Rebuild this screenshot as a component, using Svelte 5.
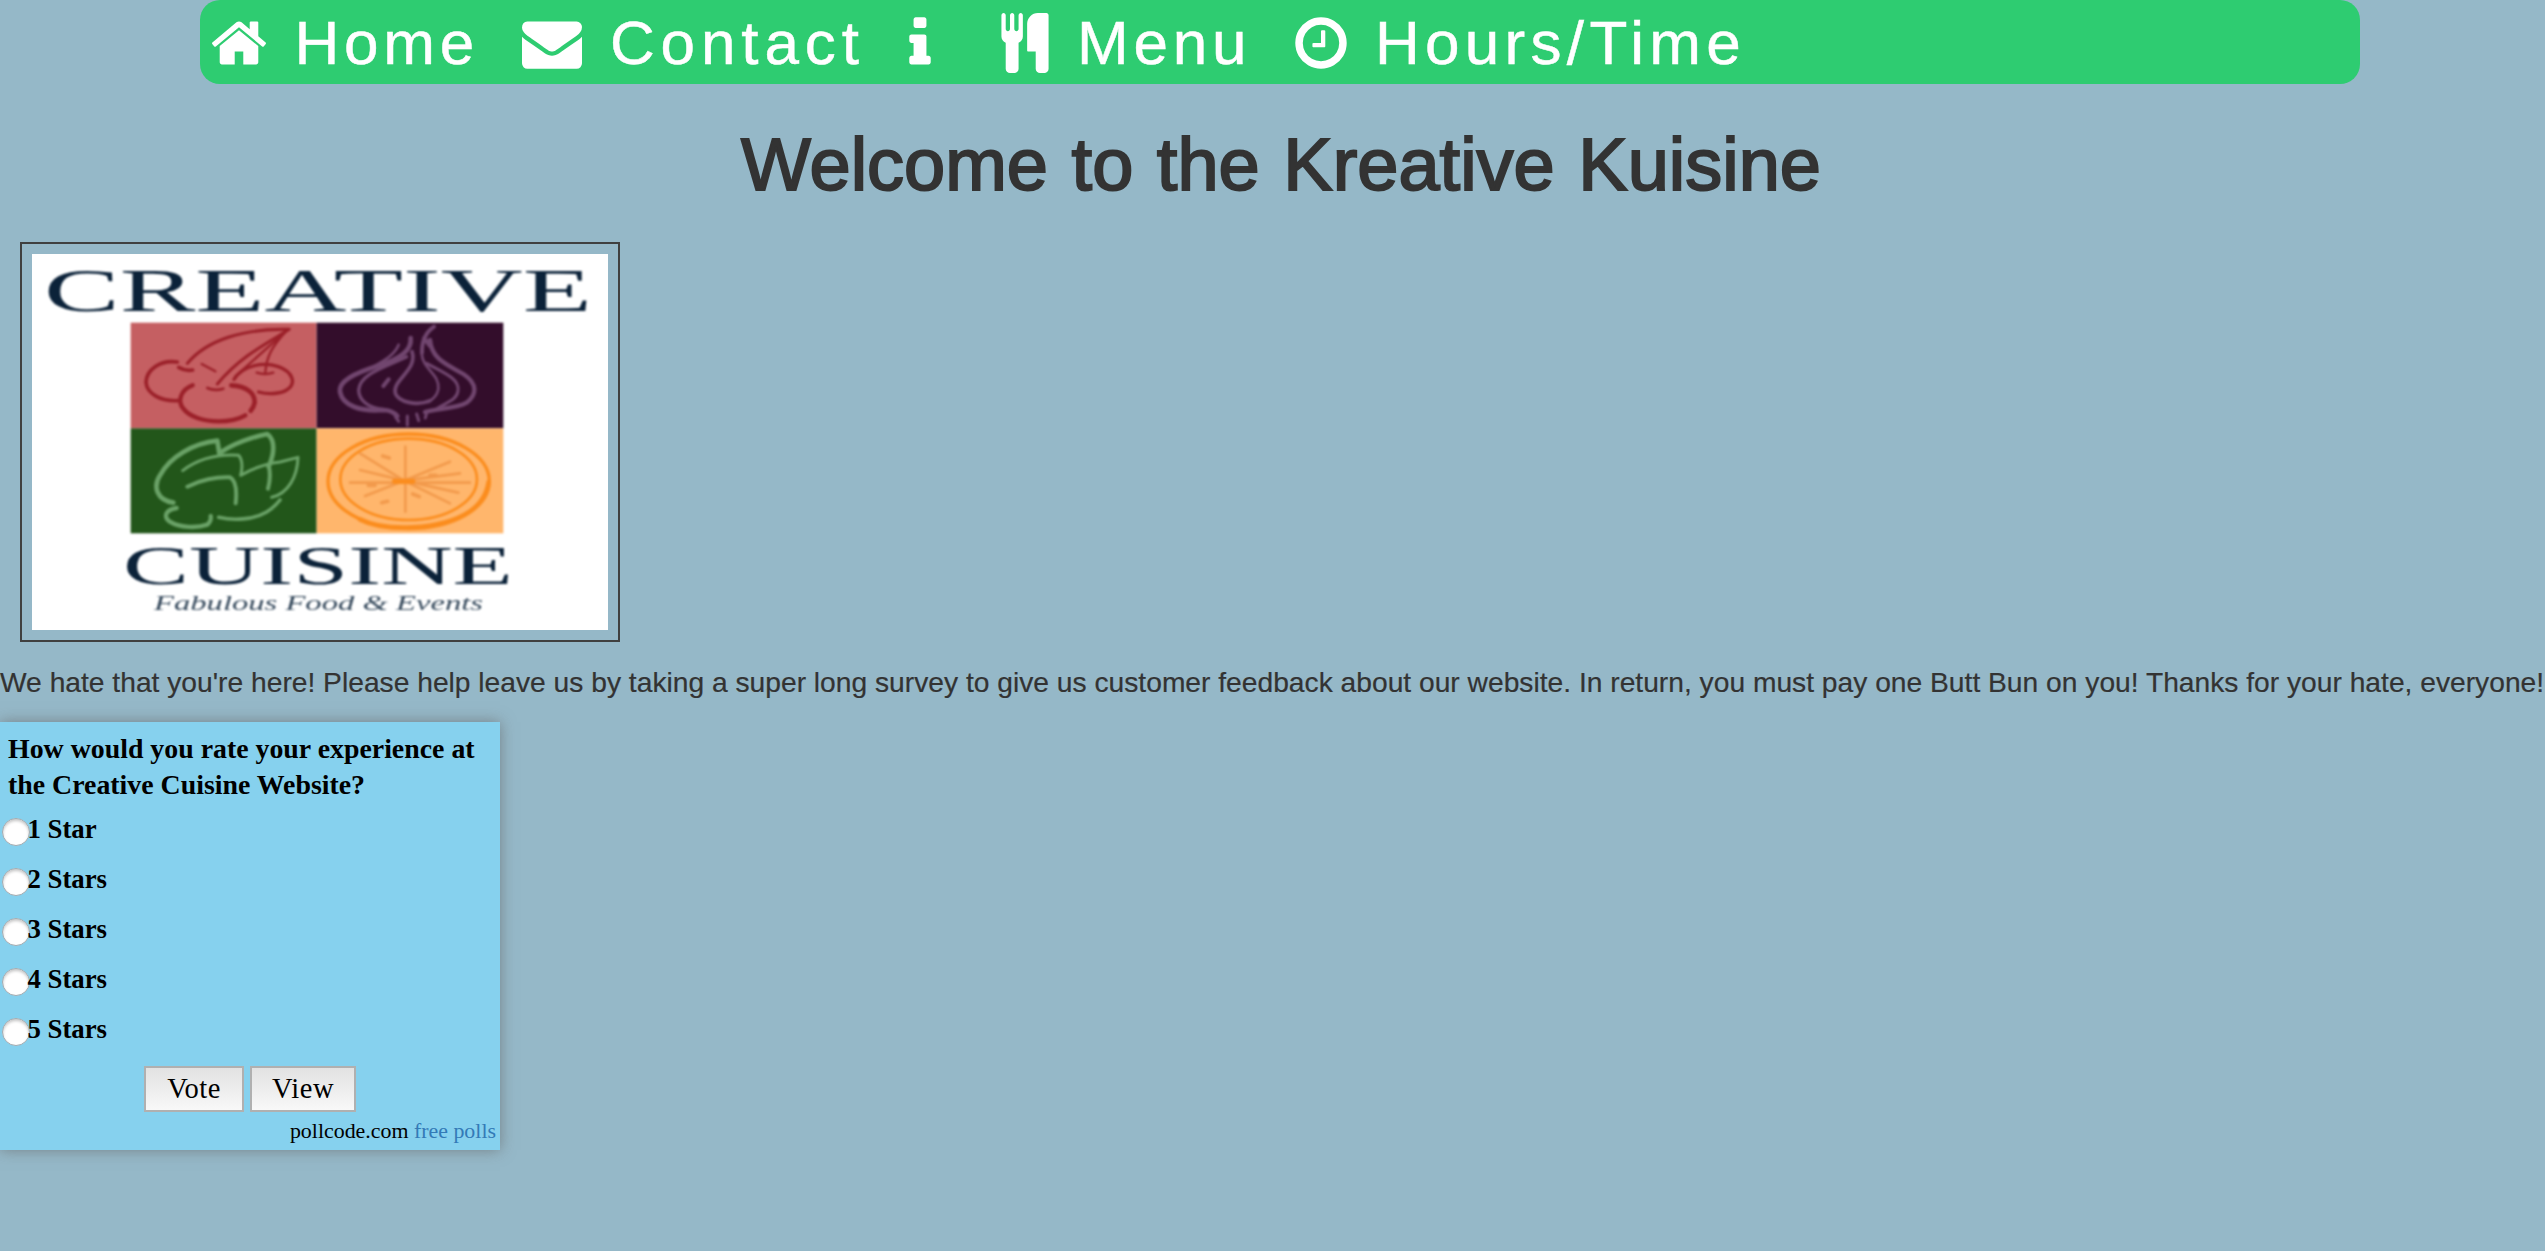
<script>
  const links = [
    {
      id: 'home',
      label: 'Home',
      icon: 'M1472 992v480q0 26-19 45t-45 19h-384v-384h-256v384h-384q-26 0-45-19t-19-45v-480q0-1 .5-3t.5-3l575-474 575 474q1 2 1 6zm223-69l-62 74q-8 9-21 11h-3q-13 0-21-7l-692-577-692 577q-12 8-24 7-13-2-21-11l-62-74q-8-10-7-23.5t11-21.5l719-599q32-26 76-26t76 26l244 204v-195q0-14 9-23t23-9h192q14 0 23 9t9 23v408l219 182q10 8 11 21.5t-7 23.5z'
    },
    {
      id: 'contact',
      label: 'Contact',
      icon: 'M1792 710v794q0 66-47 113t-113 47h-1472q-66 0-113-47t-47-113v-794q44 49 101 87 362 246 497 345 57 42 92.5 65.5t94.5 48 110 24.5h2q51 0 110-24.5t94.5-48 92.5-65.5q170-123 498-345 57-39 100-87zm0-294q0 79-49 151t-122 123q-376 261-468 325-10 7-42.5 31t-54 38.5-52 32.5-57.5 27-50 9h-2q-23 0-50-9t-57.5-27-52-32.5-54-38.5-42.5-31q-91-64-262-182.5t-205-142.5q-62-42-117-115.5t-55-136.5q0-78 41.5-130t118.5-52h1472q65 0 112.5 47t47.5 113z'
    },
    {
      id: 'info',
      label: '',
      icon: 'M1216 1344v128q0 26-19 45t-45 19h-512q-26 0-45-19t-19-45v-128q0-26 19-45t45-19h64v-384h-64q-26 0-45-19t-19-45v-128q0-26 19-45t45-19h384q26 0 45 19t19 45v576h64q26 0 45 19t19 45zm-128-1152v192q0 26-19 45t-45 19h-256q-26 0-45-19t-19-45v-192q0-26 19-45t45-19h256q26 0 45 19t19 45z'
    },
    {
      id: 'menu',
      label: 'Menu',
      icon: 'M832 64v640q0 61-35.5 111t-92.5 70v779q0 52-38 90t-90 38h-128q-52 0-90-38t-38-90v-779q-57-20-92.5-70t-35.5-111v-640q0-26 19-45t45-19 45 19 19 45v416q0 26 19 45t45 19 45-19 19-45v-416q0-26 19-45t45-19 45 19 19 45v416q0 26 19 45t45 19 45-19 19-45v-416q0-26 19-45t45-19 45 19 19 45zm768 0v1600q0 52-38 90t-90 38h-128q-52 0-90-38t-38-90v-512h-224q-13 0-22.5-9.5t-9.5-22.5v-800q0-132 94-226t226-94h256q26 0 45 19t19 45z'
    },
    {
      id: 'hours',
      label: 'Hours/Time',
      icon: 'M1024 544v448q0 14-9 23t-23 9h-320q-14 0-23-9t-9-23v-64q0-14 9-23t23-9h224v-352q0-14 9-23t23-9h64q14 0 23 9t9 23zm416 352q0-148-73-273t-198-198-273-73-273 73-198 198-73 273 73 273 198 198 273 73 273-73 198-198 73-273zm224 0q0 209-103 385.5t-279.5 279.5-385.5 103-385.5-103-279.5-279.5-103-385.5 103-385.5 279.5-279.5 385.5-103 385.5 103 279.5 279.5 103 385.5z'
    }
  ];
  const options = ['1 Star', '2 Stars', '3 Stars', '4 Stars', '5 Stars'];
  let choice = $state('');
</script>

<nav>
  {#each links as link (link.id)}
    <a class="link {link.id}" href="#{link.id}" aria-label={link.label || link.id}>
      <svg class="icon" viewBox="0 0 1792 1792"><path d={link.icon} /></svg>
      {#if link.label}<span class="label">{link.label}</span>{/if}
    </a>
  {/each}
</nav>

<h1>Welcome to the Kreative Kuisine</h1>

<div class="frame">
  <svg class="logo" viewBox="0 0 576 376">
    <rect width="576" height="376" fill="#fff" />
    <g class="soft">
      <g class="navy">
        <text x="12" y="56.5" font-size="62" textLength="548" lengthAdjust="spacingAndGlyphs">CREATIVE</text>
        <text x="91" y="329.5" font-size="55" textLength="390" lengthAdjust="spacingAndGlyphs">CUISINE</text>
        <text class="tag" x="122" y="356" font-size="21" textLength="329" lengthAdjust="spacingAndGlyphs">Fabulous Food &amp; Events</text>
      </g>
      <g transform="translate(88 56) scale(.33333)">
        <rect x="32" y="38" width="558" height="317" fill="#c55f62" />
        <rect x="590" y="38" width="560" height="317" fill="#330d2b" />
        <rect x="32" y="355" width="558" height="315" fill="#22561a" />
        <rect x="590" y="355" width="560" height="315" fill="#ffb66c" />

        <!-- cherries -->
        <g class="line cherry">
          <path stroke-width="9" d="M202 160C260 90 370 55 508 58C440 100 360 140 292 222" />
          <path stroke-width="7" d="M500 62C455 110 440 140 436 186M410 188q25 8 50 0M345 200L500 62M245 162L286 184" />
          <path stroke-width="11" d="M172 156C120 148 80 180 78 216C80 250 120 274 172 272M176 172q20 12 42 8" />
          <path stroke-width="13" d="M218 226C180 240 172 275 190 296C208 320 250 334 296 334C330 334 355 328 376 316" />
          <path stroke-width="14" d="M334 226C380 228 405 250 404 278Q402 290 392 302" />
          <path stroke-width="8" d="M262 234q22 10 48 2" />
          <path stroke-width="10" d="M342 208C370 165 430 155 475 170C520 186 530 222 500 240C480 252 445 254 416 246" />
        </g>

        <!-- garlic -->
        <g class="line garlic">
          <path stroke-width="14" d="M872 84C876 122 840 145 780 166C700 190 655 215 660 246C668 286 720 306 790 300Q815 300 832 318" />
          <path stroke-width="8" d="M836 104C822 140 780 158 745 178" />
          <path stroke-width="10" d="M860 140C800 170 720 190 716 240C716 270 745 295 790 298" />
          <path stroke-width="11" d="M876 125C895 180 815 210 826 250C835 275 890 290 930 272" />
          <path stroke-width="8" d="M905 130C908 180 960 190 955 238Q950 262 925 276" />
          <path stroke-width="9" d="M920 160C965 185 1020 205 1014 242C1010 270 985 275 950 296" />
          <path stroke-width="13" d="M930 90C935 150 985 165 1030 192C1075 222 1070 255 1040 278C1010 296 950 296 915 306" />
          <path stroke-width="12" d="M942 50Q905 75 906 128M912 84l18 24M806 208l-16 20" />
          <path stroke-width="9" d="M826 320l10 14M862 318v28M890 312l6 20M920 308l-4 16" />
        </g>

        <!-- artichoke -->
        <g class="line leaf">
          <path stroke-width="14" d="M160 578C110 570 98 530 120 496C150 440 220 400 292 392L298 430C340 400 400 380 442 372C466 390 464 430 446 470" />
          <path stroke-width="9" d="M188 482C230 450 290 432 356 436Q372 455 362 496C400 475 440 460 480 456L534 442C532 500 505 550 455 562" />
          <path stroke-width="12" d="M202 530C240 510 290 500 330 502Q354 515 347 580M446 466Q454 500 444 536" />
          <path stroke-width="13" d="M170 594C135 600 130 620 148 634C180 654 230 655 262 644Q275 632 272 618" />
          <path stroke-width="11" d="M296 622C340 632 400 630 440 606Q465 590 480 570" />
        </g>

        <!-- orange slice -->
        <g class="line orange">
          <ellipse cx="866" cy="514" rx="242" ry="142" stroke-width="10" />
          <ellipse cx="866" cy="508" rx="205" ry="122" stroke-width="8" />
          <path stroke-width="14" d="M720 628C790 664 960 664 1050 604Q1098 570 1106 516" />
          <path class="seg" stroke-width="8" d="M856 410V605M690 518H1050M720 430L852 512L990 455M720 480L852 512L990 580M735 558L852 512L1020 490M1015 548L852 512" />
          <path stroke-width="16" d="M824 514h54" />
          <path class="seg" stroke-width="11" d="M788 438l20 6M878 552l20 8M785 578l18-4M745 526h20M930 496h18" />
        </g>
      </g>
    </g>
  </svg>
</div>

<p class="intro">We hate that you're here! Please help leave us by taking a super long survey to give us customer feedback about our website. In return, you must pay one Butt Bun on you! Thanks for your hate, everyone!</p>

<form class="poll">
  <div class="question">How would you rate your experience at<br />the Creative Cuisine Website?</div>
  {#each options as option (option)}
    <label class="option">
      <input type="radio" name="rating" value={option} bind:group={choice} />
      <span>{option}</span>
    </label>
  {/each}
  <div class="actions">
    <button type="button" class="vote">Vote</button>
    <button type="button" class="view">View</button>
  </div>
  <div class="credit">pollcode.com <a href="#polls">free polls</a></div>
</form>

<style>
  :global(html) {
    overflow: hidden;
  }
  :global(body) {
    margin: 0;
    min-height: 100vh;
    background: #95b8c8;
    color: #333;
    font-family: 'Liberation Sans', Arial, sans-serif;
  }

  nav {
    box-sizing: border-box;
    width: 2160px;
    height: 84px;
    margin-left: 200px;
    padding-left: 9px;
    display: flex;
    background: #2ecc71;
    border-radius: 20px;
  }
  .link {
    display: flex;
    flex: none;
    color: #fff;
    text-decoration: none;
    font-size: 62px;
    line-height: 85px;
    white-space: nowrap;
  }
  .label { -webkit-text-stroke: 0.5px #fff; }
  .home { width: 313px; gap: 25.4px; letter-spacing: 4.8px; }
  .contact { width: 368px; gap: 27.9px; letter-spacing: 5.9px; }
  .info { width: 105.4px; }
  .menu { width: 295.6px; gap: 21.6px; letter-spacing: 4.8px; }
  .hours { gap: 24px; letter-spacing: 5.3px; }
  .icon {
    flex: none;
    width: 60px;
    height: 60px;
    margin-top: 12.7px;
    fill: #fff;
    overflow: visible;
  }

  h1 {
    margin: 40px 0 38px;
    padding-left: 17px;
    text-align: center;
    font-size: 74px;
    font-weight: 400;
    line-height: 81px;
    height: 80px;
    word-spacing: 3px;
    -webkit-text-stroke: 2px #333;
  }

  .frame {
    box-sizing: border-box;
    width: 600px;
    height: 400px;
    margin-left: 20px;
    padding: 10px;
    border: 2px solid #404040;
  }
  .logo { display: block; width: 576px; height: 376px; }
  .soft { filter: blur(0.8px); }
  .navy { fill: #0b2239; font-family: 'Liberation Serif', serif; }
  .tag { font-style: italic; fill: #33475a; }
  .line { fill: none; stroke-linecap: round; stroke-linejoin: round; }
  .cherry { stroke: #9b2029; }
  .garlic { stroke: #71466f; }
  .leaf { stroke: #6aa267; }
  .orange { stroke: #fb8d1e; }
  .seg { stroke: #f29a4c; }

  .intro {
    margin: 20px 0;
    font-size: 28.21px;
    line-height: 41px;
    height: 40px;
    white-space: nowrap;
    -webkit-text-stroke: 0.2px #333;
  }

  .poll {
    box-sizing: border-box;
    width: 500px;
    height: 428px;
    padding-top: 9px;
    background: #86d1ee;
    box-shadow: 0 0 14px rgba(100, 100, 100, 0.65);
    color: #000;
    font-family: 'Liberation Serif', serif;
  }
  .question {
    margin-bottom: 1px;
    padding-left: 8px;
    font-size: 27.85px;
    font-weight: 700;
    line-height: 36px;
    white-space: nowrap;
  }
  .option {
    display: flex;
    height: 50px;
    padding-left: 2px;
    font-size: 26.8px;
    font-weight: 700;
    line-height: 51px;
  }
  .option input {
    appearance: none;
    box-sizing: border-box;
    width: 28px;
    height: 28px;
    margin: 14px -2.6px 0 0;
    border: 1px solid #a3abb0;
    border-radius: 50%;
    background: #fff;
    box-shadow: inset 0 2px 3px rgba(0, 0, 0, 0.22);
  }
  .option span { position: relative; }
  .actions {
    display: flex;
    justify-content: center;
    gap: 6px;
    margin-top: 12px;
  }
  button {
    box-sizing: border-box;
    height: 46px;
    padding: 0;
    border: 2px solid #b0b0b0;
    background: linear-gradient(#e2e2e2, #f8f8f8);
    color: #000;
    font: 28.5px/42px 'Liberation Serif', serif;
    letter-spacing: 0.5px;
  }
  .vote { width: 100px; }
  .view { width: 106px; }
  .credit {
    padding-right: 4px;
    text-align: right;
    font-size: 21.9px;
    line-height: 37px;
  }
  .credit a { color: #337ab7; text-decoration: none; }
</style>
